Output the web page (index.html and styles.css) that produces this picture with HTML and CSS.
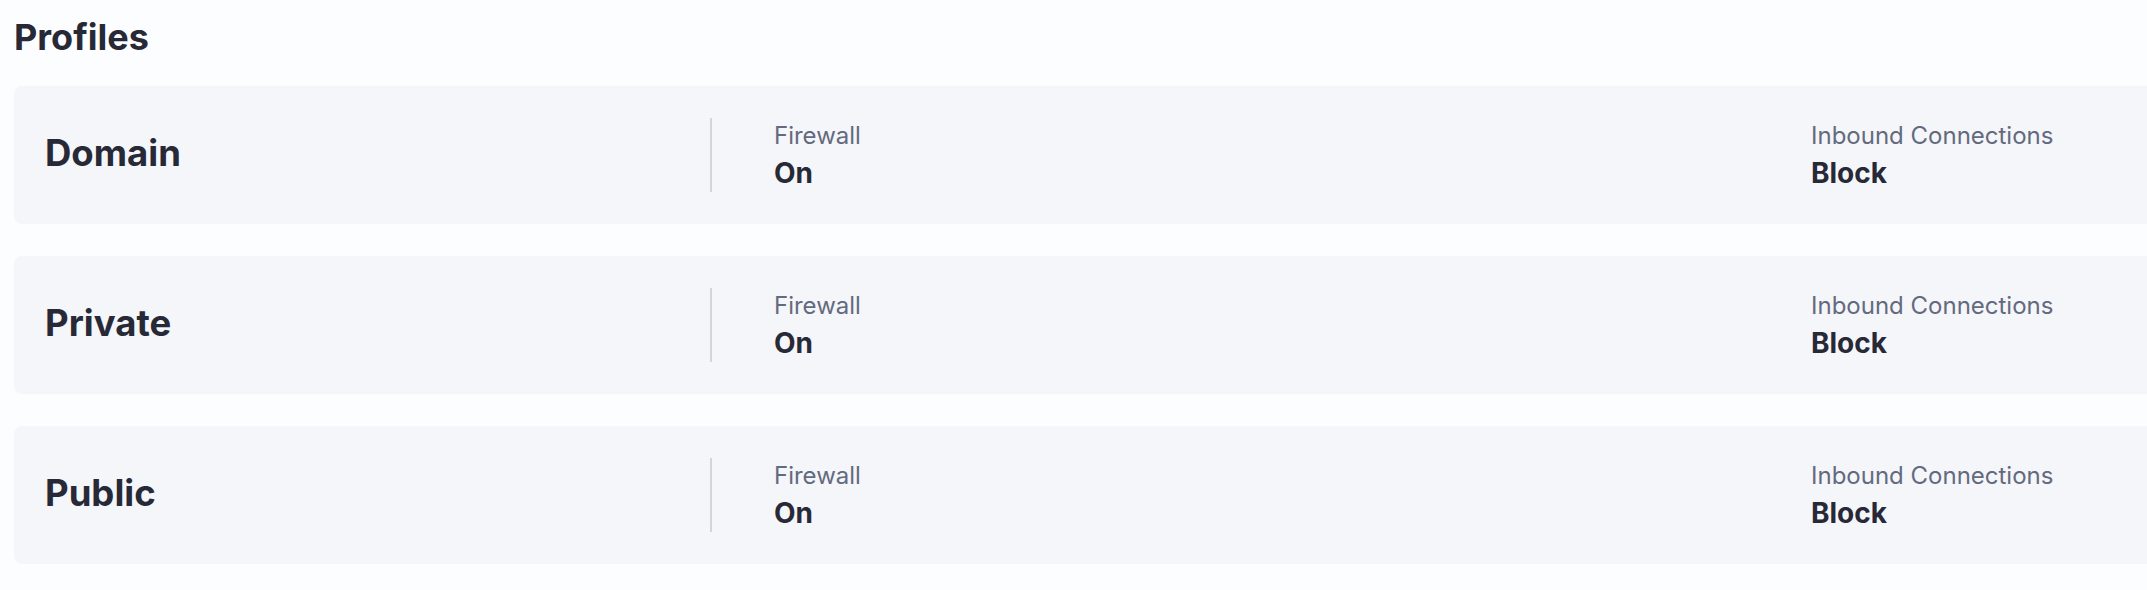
FILE: index.html
```html
<!DOCTYPE html>
<html lang="en">
<head>
<meta charset="utf-8">
<title>Profiles</title>
<link rel="stylesheet" href="styles.css">
</head>
<body>
<main class="page">
  <h2 class="page-title">Profiles</h2>
  <div class="profile-list">
    <section class="profile-card">
      <div class="profile-name">Domain</div>
      <div class="divider"></div>
      <div class="fields">
        <div class="field"><div class="field-label">Firewall</div><div class="field-value">On</div></div>
        <div class="field"><div class="field-label">Inbound Connections</div><div class="field-value">Block</div></div>
      </div>
    </section>
    <section class="profile-card">
      <div class="profile-name">Private</div>
      <div class="divider"></div>
      <div class="fields">
        <div class="field"><div class="field-label">Firewall</div><div class="field-value">On</div></div>
        <div class="field"><div class="field-label">Inbound Connections</div><div class="field-value">Block</div></div>
      </div>
    </section>
    <section class="profile-card">
      <div class="profile-name">Public</div>
      <div class="divider"></div>
      <div class="fields">
        <div class="field"><div class="field-label">Firewall</div><div class="field-value">On</div></div>
        <div class="field"><div class="field-label">Inbound Connections</div><div class="field-value">Block</div></div>
      </div>
    </section>
  </div>
</main>
</body>
</html>
```
FILE: styles.css
```css
html, body {
  margin: 0;
  padding: 0;
  background: #fcfdfe;
  overflow: hidden;
}
body {
  font-family: Inter, "Noto Sans", sans-serif;
  color: #272a36;
}
.page {
  padding: 15px 0 0 14px;
  width: 2400px;
}
.page-title {
  margin: 0 0 27px 0;
  font-size: 36px;
  font-weight: 700;
  line-height: 44px;
}
.profile-list {
  display: flex;
  flex-direction: column;
  gap: 32px;
}
.profile-card {
  display: flex;
  align-items: center;
  background: #f4f6fa;
  border-radius: 8px;
  padding: 32px 0 32px 31px;
}
.profile-name {
  flex: 0 0 665px;
  font-size: 36.5px;
  font-weight: 700;
  line-height: 44px;
  padding-bottom: 4px;
}
.divider {
  width: 2px;
  height: 74px;
  background: #d0d5de;
}
.fields {
  display: grid;
  grid-template-columns: 1037px auto;
  margin-left: 62px;
}
.field-label {
  font-size: 24px;
  line-height: 29px;
  color: #646a7e;
}
.field-value {
  margin-top: 6px;
  font-size: 28px;
  line-height: 34px;
  font-weight: 700;
}
```
